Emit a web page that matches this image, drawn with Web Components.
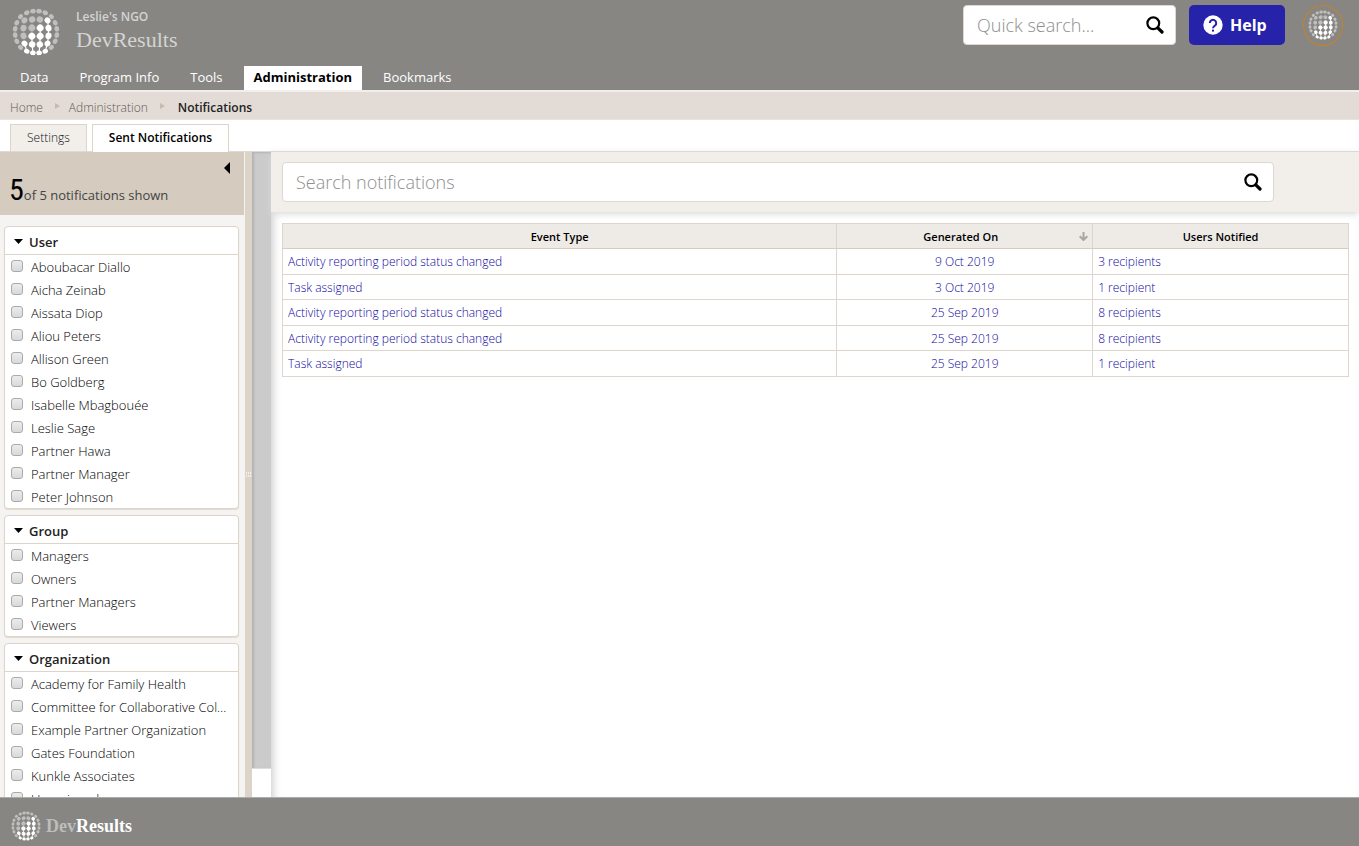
<!DOCTYPE html>
<html lang="en">
<head>
<meta charset="utf-8">
<title>Sent Notifications - DevResults</title>
<style>
html, body { margin: 0; height: 100%; }
body { font-family: "Open Sans", "Noto Sans", sans-serif; font-size: 13px; color: #222; background: #fff; }
</style>
</head>
<body>
<dr-app></dr-app>

<template id="t-app">
<style>
:host { display: flex; flex-direction: column; height: 100vh; overflow: hidden; }
main { flex: 1; min-height: 0; display: flex; border-top: 1px solid #ddd9d4; }
.crumbs { display: flex; align-items: center; height: 23px; padding: 4px 10px 0; background: #e3dbd5; border-bottom: 1px solid #e9e4e0; font-size: 12px; font-weight: 300; }
.crumbs a { color: #5f5a55; text-decoration: none; }
.crumbs b { padding-left: 4px; color: #222; font-weight: 600; }
.crumbs svg { width: 5px; height: 6px; margin: 0 9px 3px 12px; fill: #c9bba9; }
.tabs { display: flex; gap: 5px; height: 31px; padding: 0 10px; box-sizing: border-box; align-items: flex-end; }
.tabs a { box-sizing: border-box; height: 27px; line-height: 26px; padding: 0 16px; border: 1px solid #ddd5ca; border-bottom: 0; background: #f2efeb; color: #111; font-size: 12px; font-weight: 300; text-decoration: none; }
.tabs a.on { background: #fff; color: #000; font-weight: 600; height: 28px; margin-bottom: -1px; position: relative; }
</style>
<dr-header></dr-header>
<nav class="crumbs" aria-label="Breadcrumb">
<a href="#home">Home</a><svg viewBox="0 0 5 6"><path d="M0 0l5 3-5 3z"/></svg><a href="#administration">Administration</a><svg viewBox="0 0 5 6"><path d="M0 0l5 3-5 3z"/></svg><b>Notifications</b>
</nav>
<nav class="tabs" aria-label="Sections"><a href="#settings">Settings</a><a href="#sent" class="on" aria-current="page">Sent Notifications</a></nav>
<main>
<dr-sidebar></dr-sidebar>
<dr-splitter></dr-splitter>
<dr-results></dr-results>
</main>
<dr-footer></dr-footer>
</template>

<template id="t-globe">
<style>
:host { display: block; }
svg { display: block; width: 100%; height: 100%; }
</style>
<svg viewBox="-24 -24 48 48" aria-hidden="true"></svg>
</template>

<template id="t-header">
<style>
:host { display: flex; flex-direction: column; height: 90px; background: #878683; border-bottom: 2px solid #f1eeec; box-sizing: content-box; }
.top { display: flex; height: 66px; }
.brand { display: flex; flex: 1; color: #d4d4d2; }
dr-globe { width: 48px; height: 48px; margin: 8px 16px 0 12px; }
.brand > div { padding-top: 8px; }
.org { font-size: 12px; line-height: 17px; font-weight: 600; }
.product { font-family: "Roboto Slab", "Liberation Serif", serif; font-size: 22px; line-height: 30px; }
dr-search { width: 213px; margin: 5px 13px 0 0; }
button { display: flex; align-items: center; width: 96px; height: 40px; margin: 5px 18px 0 0; padding: 0 0 0 14px; border: 0; border-radius: 5px; background: #2722aa; color: #fff; font: 700 16px "Open Sans", sans-serif; gap: 7px; }
button svg { width: 20px; height: 20px; }
.user { box-sizing: border-box; width: 40px; height: 41px; margin: 5px 16px 0 0; border: 1px solid #c88224; border-radius: 50%; padding: 4px; }
.user dr-globe { width: 30px; height: 30px; margin: 0; }
nav { display: flex; height: 24px; padding-left: 10px; gap: 11px; font-size: 13px; line-height: 23px; }
nav a { color: #fff; text-decoration: none; padding: 0 10px; font-weight: 400; }
nav a.on { background: #fff; color: #000; font-weight: 700; }
</style>
<div class="top">
<div class="brand"><dr-globe></dr-globe><div><div class="org">Leslie's NGO</div><div class="product">DevResults</div></div></div>
<dr-search label="Quick search..."></dr-search>
<button type="button"><svg viewBox="0 0 20 20" aria-hidden="true"><circle cx="10" cy="10" r="9.7" fill="#fff"/><path d="M6.8 8a3.2 3.2 0 1 1 5.3 2.4c-1.200 1-2.100 1.500-2.100 2.900" fill="none" stroke="#2722aa" stroke-width="2"/><rect x="9" y="14.600" width="2" height="2" fill="#2722aa"/></svg><span>Help</span></button>
<a class="user" href="#profile" aria-label="Profile"><dr-globe></dr-globe></a>
</div>
<nav aria-label="Main"><a href="#data">Data</a><a href="#program">Program Info</a><a href="#tools">Tools</a><a href="#admin" class="on" aria-current="page">Administration</a><a href="#bookmarks">Bookmarks</a></nav>
</template>

<template id="t-search">
<style>
:host { display: block; }
label { display: flex; align-items: center; box-sizing: border-box; height: 40px; padding: 0 11px 0 13px; background: #fff; border: 1px solid #ddd8d0; border-radius: 4px; }
input { flex: 1; min-width: 0; height: 30px; padding: 0; border: 0; outline: 0; background: none; color: #333; font: 300 18px "Open Sans", sans-serif; }
input::placeholder { color: #8e8e8e; opacity: 1; }
svg { width: 18px; height: 18px; fill: none; stroke: #000; }
</style>
<label><input type="search"><svg viewBox="0 0 18 18" aria-hidden="true"><circle cx="7.300" cy="7.300" r="5.900" stroke-width="2.200"/><path d="M11.800 11.800l4.200 4.200" stroke-width="3.200" stroke-linecap="round"/></svg></label>
</template>

<template id="t-sidebar">
<style>
:host { display: flex; flex-direction: column; width: 244px; flex: none; overflow: hidden; background: #f5f4f2; }
.head { flex: none; display: flex; justify-content: space-between; box-sizing: border-box; height: 63px; padding: 10px 14px 4px 9px; background: #d5ccbf; }
.count { align-self: flex-end; display: flex; align-items: baseline; font-weight: 400; line-height: 32px; color: #444; }
.count b { font: 400 30px/32px "Liberation Sans Narrow", "Roboto Condensed", Roboto, sans-serif; color: #000; }
button { width: 6px; height: 12px; padding: 0; border: 0; background: none; }
button svg { display: block; width: 6px; height: 12px; }
.list { display: flex; flex-direction: column; gap: 6px; padding: 11px 5px 0 4px; }
</style>
<div class="head"><div class="count"><b>5</b><span>of 5 notifications shown</span></div><button type="button" aria-label="Collapse filters"><svg viewBox="0 0 6 12"><path d="M6 0v12L0 6z"/></svg></button></div>
<div class="list">
<dr-filter label="User" items="Aboubacar Diallo|Aicha Zeinab|Aissata Diop|Aliou Peters|Allison Green|Bo Goldberg|Isabelle Mbagbouée|Leslie Sage|Partner Hawa|Partner Manager|Peter Johnson"></dr-filter>
<dr-filter label="Group" items="Managers|Owners|Partner Managers|Viewers"></dr-filter>
<dr-filter label="Organization" items="Academy for Family Health|Committee for Collaborative Collection|Example Partner Organization|Gates Foundation|Kunkle Associates|Unassigned"></dr-filter>
</div>
</template>

<template id="t-filter">
<style>
:host { display: block; flex: none; background: #fff; border: 1px solid #ddd5ca; border-radius: 4px; box-shadow: 0 1px 1px #dedad4; }
h2 { display: flex; align-items: center; gap: 6px; height: 28px; margin: 0; padding: 3px 0 0 9px; box-sizing: border-box; font-size: 13px; font-weight: 600; color: #222; border-bottom: 1px solid #ddd5ca; }
h2 svg { width: 9px; height: 5px; margin-bottom: 1px; }
label { display: flex; align-items: center; gap: 8px; height: 23px; padding: 0 10px 0 6px; font-weight: 300; color: #000; }
label span { overflow: hidden; white-space: nowrap; text-overflow: ellipsis; }
input { appearance: none; flex: none; width: 12px; height: 12px; margin: 0 0 2px; border: 1px solid #aaa; border-radius: 3px; background: linear-gradient(#ececec, #d9d9d9); }
</style>
<h2><svg viewBox="0 0 9 5" aria-hidden="true"><path d="M0 0h9L4.500 5z"/></svg><slot></slot></h2>
</template>

<template id="t-splitter">
<style>
:host { display: flex; flex: none; width: 27px; }
.bar { display: flex; align-items: center; justify-content: center; box-sizing: border-box; width: 8px; background: #ddd4c9; border-left: 1px solid #f4f1ee; }
.bar svg { width: 5px; height: 5px; fill: #f6f3ef; }
.track { flex: 1; display: flex; flex-direction: column; background: #fff; }
.thumb { flex: 1; margin-bottom: 28px; background: #cbcbcb; border-bottom: 1px solid #ddd; box-shadow: inset 2px 1px 2px #b4b4b4; }
</style>
<div class="bar"><svg viewBox="0 0 5 5" aria-hidden="true"><path d="M0 0h1v2h-1zM2 0h1v2h-1zM4 0h1v2h-1zM0 3h1v2h-1zM2 3h1v2h-1zM4 3h1v2h-1z"/></svg></div>
<div class="track"><div class="thumb"></div></div>
</template>

<template id="t-results">
<style>
:host { flex: 1; min-width: 0; display: flex; flex-direction: column; box-shadow: inset 9px 0 9px -7px #ccc; }
.bar { padding: 10px 85px 10px 11px; background: #f2efeb; box-shadow: 0 2px 7px #d8d8d8; }
.body { padding: 11px 10px 0 11px; }
table { width: 100%; table-layout: fixed; border-collapse: collapse; font-size: 12px; font-weight: 300; background: #fff; }
th, td { border: 1px solid #ded6cd; padding: 0 5px; box-sizing: border-box; }
th { height: 25px; background: #eeebe7; color: #000; font-size: 11px; font-weight: 600; border-bottom-color: #d6ccc2; }
td { height: 26px; text-align: left; }
tr:nth-child(even) td { height: 25px; }
th:first-child { width: 52%; }
th:nth-child(2) { width: 24%; }
td:nth-child(2) { text-align: center; }
.sort { display: flex; align-items: center; }
.sort svg { width: 9px; height: 9px; margin-right: -1px; fill: none; stroke: #aaa5a0; stroke-width: 2; }
.sort span { flex: 1; }
a { color: #0f08a0; text-decoration: none; }
</style>
<div class="bar"><dr-search label="Search notifications"></dr-search></div>
<div class="body"><table>
<thead><tr><th scope="col">Event Type</th><th scope="col"><div class="sort"><span>Generated On</span><svg viewBox="0 0 9 9" aria-hidden="true"><path d="M4.500 0v8M.700 4.200l3.800 3.800 3.800-3.800"/></svg></div></th><th scope="col">Users Notified</th></tr></thead>
<tbody></tbody>
</table></div>
</template>

<template id="t-footer">
<style>
:host { display: flex; align-items: center; height: 49px; box-sizing: border-box; padding: 7px 0 0 11px; background: #878683; border-top: 1px solid #a9adab; color: #fff; gap: 5px; }
dr-globe { width: 30px; height: 30px; }
.name { font: 700 18px/30px "Roboto Slab", "Liberation Serif", serif; }
.name span { color: #bdbdbb; }
</style>
<dr-globe></dr-globe><div class="name"><span>Dev</span>Results</div>
</template>

<script>
const SVG = 'http://www.w3.org/2000/svg';

class TemplateElement extends HTMLElement {
  constructor() {
    super();
    this.attachShadow({ mode: 'open' })
      .append(document.getElementById(this.constructor.template).content.cloneNode(true));
  }
}

class DrGlobe extends TemplateElement {
  static template = 't-globe';
  connectedCallback() {
    const svg = this.shadowRoot.querySelector('svg');
    if (svg.childNodes.length) return;
    // First bright column of each row; the rest of the row up to column 4 is bright.
    const brightFrom = [9, 4, 3, 2, 1, 1];
    const points = [];
    for (let r = 0; r < 6; r++) {
      for (let c = 0; c < 6; c++) {
        const u = (c - 2.5) / 2.5, v = (r - 2.5) / 2.5;
        points.push({
          x: 21 * u * Math.sqrt(1 - v * v * 0.46),
          y: 21 * v * Math.sqrt(1 - u * u * 0.46),
          bright: c >= brightFrom[r] && c < 5, r, c
        });
      }
    }
    for (const p of points) {
      const below = points.find(q => q.c === p.c && q.r === p.r + 1);
      if (p.bright && below && below.bright) {
        const line = document.createElementNS(SVG, 'path');
        line.setAttribute('d', `M${p.x} ${p.y}L${below.x} ${below.y}`);
        line.setAttribute('stroke', '#fff');
        line.setAttribute('stroke-width', '1.2');
        svg.append(line);
      }
      const d = Math.min(1, Math.hypot(p.x, p.y) / 23);
      const dot = document.createElementNS(SVG, 'ellipse');
      dot.setAttribute('rx', 3.5 - 1.4 * d * d);
      dot.setAttribute('ry', 3.5 - 0.8 * d * d);
      dot.setAttribute('transform', `translate(${p.x} ${p.y}) rotate(${Math.atan2(p.y, p.x) * 180 / Math.PI})`);
      dot.setAttribute('fill', p.bright ? '#fff' : '#bfbfbd');
      svg.append(dot);
    }
  }
}

class DrSearch extends TemplateElement {
  static template = 't-search';
  connectedCallback() {
    const input = this.shadowRoot.querySelector('input');
    input.placeholder = this.getAttribute('label');
    input.setAttribute('aria-label', this.getAttribute('label'));
  }
}

class DrFilter extends TemplateElement {
  static template = 't-filter';
  connectedCallback() {
    this.textContent = this.getAttribute('label');
    for (const name of this.getAttribute('items').split('|')) {
      const label = document.createElement('label');
      const box = document.createElement('input');
      const text = document.createElement('span');
      box.type = 'checkbox';
      text.textContent = name;
      label.append(box, text);
      this.shadowRoot.append(label);
    }
  }
}

class DrResults extends TemplateElement {
  static template = 't-results';
  connectedCallback() {
    const rows = [
      ['Activity reporting period status changed', '9 Oct 2019', '3 recipients'],
      ['Task assigned', '3 Oct 2019', '1 recipient'],
      ['Activity reporting period status changed', '25 Sep 2019', '8 recipients'],
      ['Activity reporting period status changed', '25 Sep 2019', '8 recipients'],
      ['Task assigned', '25 Sep 2019', '1 recipient']
    ];
    const body = this.shadowRoot.querySelector('tbody');
    for (const row of rows) {
      const tr = body.insertRow();
      for (const value of row) {
        const a = document.createElement('a');
        a.href = '#notification';
        a.textContent = value;
        tr.insertCell().append(a);
      }
    }
  }
}

customElements.define('dr-globe', DrGlobe);
customElements.define('dr-search', DrSearch);
customElements.define('dr-filter', DrFilter);
customElements.define('dr-results', DrResults);
customElements.define('dr-splitter', class extends TemplateElement { static template = 't-splitter'; });
customElements.define('dr-sidebar', class extends TemplateElement { static template = 't-sidebar'; });
customElements.define('dr-header', class extends TemplateElement { static template = 't-header'; });
customElements.define('dr-footer', class extends TemplateElement { static template = 't-footer'; });
customElements.define('dr-app', class extends TemplateElement { static template = 't-app'; });
</script>
</body>
</html>
